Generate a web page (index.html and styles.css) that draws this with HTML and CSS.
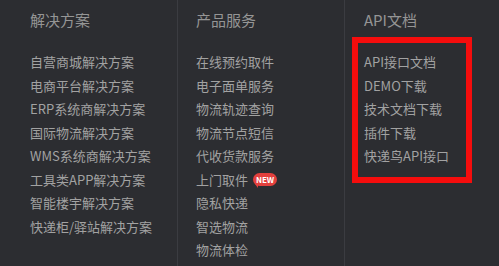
FILE: index.html
```html
<!DOCTYPE html>
<html lang="zh-CN">
<head>
  <meta charset="UTF-8">
  <meta name="viewport" content="width=device-width, initial-scale=1.0">
  <title>快递鸟</title>
  <link rel="stylesheet" href="styles.css">
</head>
<body>
  <div class="footer">
    <!-- 解决方案 -->
    <div class="col col-solution">
      <h3>解决方案</h3>
      <ul>
        <li>自营商城解决方案</li>
        <li>电商平台解决方案</li>
        <li>ERP系统商解决方案</li>
        <li>国际物流解决方案</li>
        <li>WMS系统商解决方案</li>
        <li>工具类APP解决方案</li>
        <li>智能楼宇解决方案</li>
        <li>快递柜/驿站解决方案</li>
      </ul>
    </div>
    <!-- 产品服务 -->
    <div class="col col-product">
      <h3>产品服务</h3>
      <ul>
        <li>在线预约取件</li>
        <li>电子面单服务</li>
        <li>物流轨迹查询</li>
        <li>物流节点短信</li>
        <li>代收货款服务</li>
        <li>上门取件 <span class="badge">NEW</span></li>
        <li>隐私快递</li>
        <li>智选物流</li>
        <li>物流体检</li>
      </ul>
    </div>
    <!-- API文档 -->
    <div class="col col-api">
      <h3>API文档</h3>
      <ul class="api-box">
        <li>API接口文档</li>
        <li>DEMO下载</li>
        <li>技术文档下载</li>
        <li>插件下载</li>
        <li>快递鸟API接口</li>
      </ul>
    </div>
  </div>
</body>
</html>
```

FILE: styles.css
```css
/* 页脚导航 */
body {
  margin: 0;
  background-color: #2c2d31;
  font-family: "Noto Sans CJK SC", "Microsoft YaHei", sans-serif;
  color: #a2a2a2;
  overflow: hidden;
}

.footer {
  display: grid;
  grid-template-columns: 177px 167px 1fr;
  height: 266px;
}

.col {
  padding-top: 10px;
}

.col-solution {
  padding-left: 30px;
}

.col-product {
  border-left: 1px solid #3b3c41;
  padding-left: 18px;
}

.col-api {
  border-left: 1px solid #3b3c41;
  padding-left: 7px;
}

h3 {
  margin: 0 0 20px;
  font-size: 15px;
  font-weight: normal;
  line-height: 20px;
  color: #959595;
}

.col-api h3 {
  margin-bottom: 7px;
  padding-left: 12px;
}

ul {
  list-style: none;
  margin: 0;
  padding: 0;
}

li {
  font-size: 13px;
  line-height: 23.5px;
  white-space: nowrap;
}

/* 红色标注框 */
.api-box {
  width: 102px;
  border: 6px solid #f50d0d;
  padding: 7px 0 9px 6px;
}

/* NEW 标签 */
.badge {
  position: relative;
  display: inline-block;
  margin-left: 2px;
  padding: 0 3px;
  height: 13px;
  line-height: 13px;
  font-size: 8px;
  font-weight: bold;
  color: #fff;
  background: #e2403d;
  border-radius: 7px;
  vertical-align: 2px;
}

.badge::after {
  content: "";
  position: absolute;
  left: 2px;
  bottom: -2px;
  border-left: 3px solid transparent;
  border-top: 4px solid #e2403d;
}
```
